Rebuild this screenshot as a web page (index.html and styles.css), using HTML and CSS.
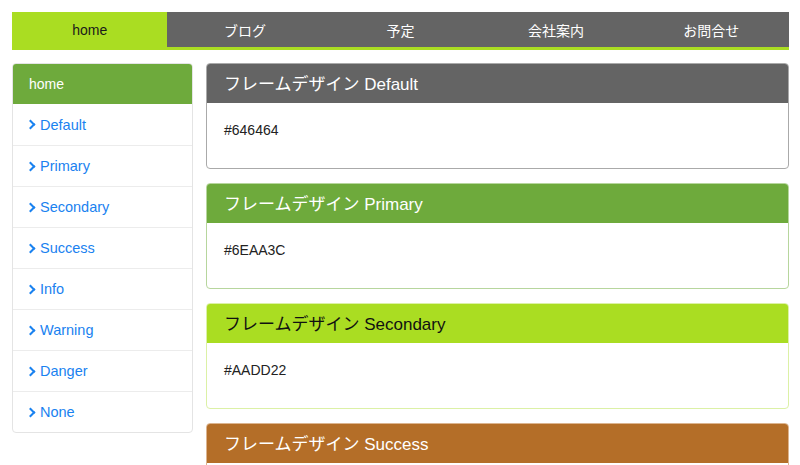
FILE: index.html
```html
<!DOCTYPE html>
<html lang="ja">
  <head>
    <meta charset="UTF-8" />
    <meta name="viewport" content="width=device-width, initial-scale=1.0" />
    <title>フレームデザイン</title>
    <link rel="stylesheet" href="styles.css">
  </head>
  <body>
    <nav class="topnav">
      <a class="tab active" href="#">home</a>
      <a class="tab" href="#">ブログ</a>
      <a class="tab" href="#">予定</a>
      <a class="tab" href="#">会社案内</a>
      <a class="tab" href="#">お問合せ</a>
    </nav>

    <div class="layout">
      <aside class="sidebar">
        <div class="side-head">home</div>
        <a class="side-item" href="#default"><span class="chev"></span>Default</a>
        <a class="side-item" href="#primary"><span class="chev"></span>Primary</a>
        <a class="side-item" href="#secondary"><span class="chev"></span>Secondary</a>
        <a class="side-item" href="#success"><span class="chev"></span>Success</a>
        <a class="side-item" href="#info"><span class="chev"></span>Info</a>
        <a class="side-item" href="#warning"><span class="chev"></span>Warning</a>
        <a class="side-item" href="#danger"><span class="chev"></span>Danger</a>
        <a class="side-item" href="#none"><span class="chev"></span>None</a>
      </aside>

      <main class="cards">
        <section class="card card-default" id="default">
          <h2 class="card-head">フレームデザイン Default</h2>
          <div class="card-body">#646464</div>
        </section>
        <section class="card card-primary" id="primary">
          <h2 class="card-head">フレームデザイン Primary</h2>
          <div class="card-body">#6EAA3C</div>
        </section>
        <section class="card card-secondary" id="secondary">
          <h2 class="card-head">フレームデザイン Secondary</h2>
          <div class="card-body">#AADD22</div>
        </section>
        <section class="card card-success" id="success">
          <h2 class="card-head">フレームデザイン Success</h2>
          <div class="card-body">#B46E28</div>
        </section>
      </main>
    </div>
  </body>
</html>
```

FILE: styles.css
```css
body {
  font-family: "Liberation Sans", Arial, "Noto Sans CJK JP", sans-serif;
  margin: 0;
  padding: 12px 11px 0 12px;
  background-color: #ffffff;
  color: #222222;
}

a {
  text-decoration: none;
}

.topnav {
  display: grid;
  grid-template-columns: repeat(5, 1fr);
  background-color: #646464;
  border-bottom: 3px solid #aadd22;
}

.tab {
  height: 35px;
  display: flex;
  align-items: center;
  justify-content: center;
  font-size: 14px;
  color: #ffffff;
}

.tab.active {
  background-color: #aadd22;
  color: #1a1a1a;
}

.layout {
  display: flex;
  align-items: flex-start;
  gap: 13px;
  margin-top: 13px;
}

.sidebar {
  width: 181px;
  flex-shrink: 0;
  border: 1px solid #e4e4e4;
  border-radius: 4px;
  overflow: hidden;
  box-sizing: border-box;
}

.side-head {
  height: 41px;
  display: flex;
  align-items: center;
  padding-left: 17px;
  background-color: #6eaa3c;
  color: #ffffff;
  font-size: 14px;
  margin: -1px -1px 0;
}

.side-item {
  height: 40px;
  display: flex;
  align-items: center;
  padding-left: 17px;
  border-top: 1px solid #ececec;
  color: #1a82f0;
  font-size: 14.5px;
}

.side-item:first-of-type {
  border-top: none;
  height: 41px;
}

.chev {
  width: 5px;
  height: 5px;
  border-top: 2px solid #1a82f0;
  border-right: 2px solid #1a82f0;
  transform: rotate(45deg);
  margin: 0 6px 0 -3px;
}

.cards {
  flex: 1;
  display: flex;
  flex-direction: column;
  gap: 14px;
}

.card {
  border: 1px solid #aaaaaa;
  border-radius: 4px;
  overflow: hidden;
}

.card-head {
  margin: 0;
  height: 39px;
  box-sizing: border-box;
  display: flex;
  align-items: center;
  padding: 0 0 3px 17px;
  font-size: 17px;
  font-weight: 400;
  color: #ffffff;
}

.card-body {
  height: 65px;
  padding: 19px 17px 0;
  box-sizing: border-box;
  font-size: 14px;
  color: #222222;
}

.card-default {
  border-color: #aaaaaa;
}

.card-default .card-head {
  background-color: #646464;
}

.card-primary {
  border-color: #b7d69d;
}

.card-primary .card-head {
  background-color: #6eaa3c;
}

.card-secondary {
  border-color: #dcf1a6;
}

.card-secondary .card-head {
  background-color: #aadd22;
  color: #111111;
}

.card-success {
  border-color: #dcb48f;
}

.card-success .card-head {
  background-color: #b46e28;
}
```
